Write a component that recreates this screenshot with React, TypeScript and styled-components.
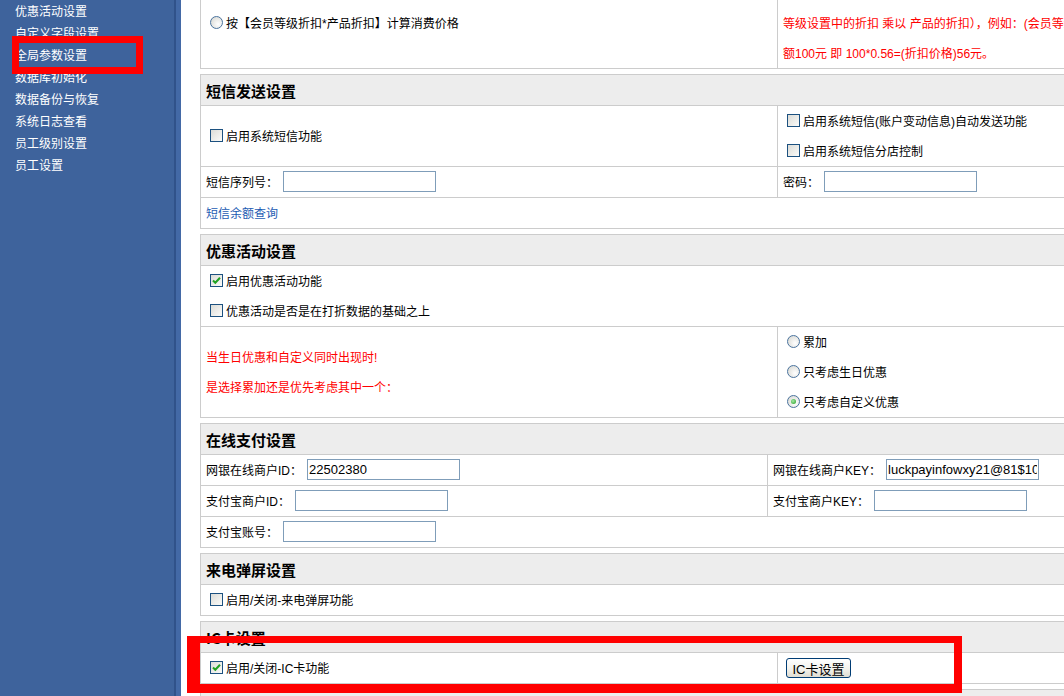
import React from 'react'
import styled, { createGlobalStyle, css } from 'styled-components'

const GlobalStyle = createGlobalStyle`
  html, body {
    margin: 0;
    padding: 0;
    background: #ffffff;
  }
  body {
    font-family: 'Liberation Sans', 'Noto Sans CJK SC', sans-serif;
    font-size: 12px;
    color: #000000;
  }
`

const Page = styled.div`
  position: relative;
  display: flex;
  width: 1064px;
  height: 696px;
  overflow: hidden;
`

const Sidebar = styled.nav`
  flex: 0 0 181px;
  padding-top: 1px;
  background: linear-gradient(
    to right,
    #3e639c 0 174px,
    #30528a 174px 176px,
    #4369a6 176px 181px
  );
`

const NavItem = styled.div`
  height: 22px;
  line-height: 22px;
  padding-left: 15px;
  color: #ffffff;
  font-size: 12px;
  white-space: nowrap;
`

const Main = styled.main`
  flex: 1;
  min-width: 0;
  padding-left: 19px;
  overflow: hidden;
  background: #ffffff;
`

const Panel = styled.section<{ $offset?: number }>`
  width: 900px;
  border: 1px solid #cccccc;
  margin-top: ${(p) => p.$offset ?? 0}px;
  margin-bottom: 5px;
`

const Header = styled.h3`
  margin: 0;
  height: 25px;
  padding: 5px 0 0 5px;
  line-height: 25px;
  background: #ededed;
  border-bottom: 1px solid #cccccc;
  font: bold 15px 'Noto Sans CJK SC', sans-serif;
  color: #000000;
  white-space: nowrap;
  overflow: hidden;
`

const Row = styled.div<{ $split?: number }>`
  display: grid;
  grid-template-columns: ${(p) => (p.$split ? `${p.$split}px 1fr` : '1fr')};
  & + & {
    border-top: 1px solid #cccccc;
  }
`

const Cell = styled.div<{ $divider?: boolean }>`
  min-width: 0;
  padding: 0 5px;
  display: flex;
  flex-direction: column;
  justify-content: center;
  white-space: nowrap;
  ${(p) =>
    p.$divider &&
    css`
      border-left: 1px solid #cccccc;
    `}
`

const Line = styled.div<{ $tone?: 'red' | 'plain' }>`
  box-sizing: border-box;
  height: 30px;
  padding-bottom: 1px;
  display: flex;
  align-items: center;
  gap: 3px;
  font-size: 12px;
  color: ${(p) => (p.$tone === 'red' ? '#ff0000' : '#000000')};
`

const Check = styled.span`
  box-sizing: border-box;
  flex: none;
  width: 13px;
  height: 13px;
  margin-left: 4px;
  border: 1px solid #1c5180;
  background: linear-gradient(135deg, #dcdcd7, #fbfbf9);
  display: inline-flex;
  align-items: center;
  justify-content: center;
`

const Radio = styled.span<{ $on?: boolean }>`
  position: relative;
  box-sizing: border-box;
  flex: none;
  width: 13px;
  height: 13px;
  margin-left: 4px;
  border-radius: 50%;
  border: 1px solid #4a739e;
  background: radial-gradient(circle at 65% 65%, #ffffff, #d4d4ce);
  ${(p) =>
    p.$on &&
    css`
      &::after {
        content: '';
        position: absolute;
        left: 3px;
        top: 3px;
        width: 5px;
        height: 5px;
        border-radius: 50%;
        background: radial-gradient(circle at 40% 40%, #a6eaa6, #1d9a1d);
      }
    `}
`

const Field = styled.input`
  box-sizing: border-box;
  flex: none;
  width: 153px;
  height: 21px;
  margin-left: 2px;
  padding: 0 1px;
  border: 1px solid #7f9db9;
  font: 13px 'Liberation Sans', sans-serif;
  color: #000000;
  outline: none;
  background: #ffffff;
`

const Btn = styled.button`
  width: 65px;
  height: 20px;
  margin-left: 3px;
  padding: 0;
  border: 1px solid #003c74;
  border-radius: 3px;
  background: linear-gradient(#ffffff, #f3f2ec 55%, #dedcd2);
  font: 13px 'Liberation Sans', 'Noto Sans CJK SC', sans-serif;
  color: #000000;
`

const QueryLink = styled.a`
  color: #1d5cb3;
  text-decoration: none;
  font-size: 12px;
  cursor: pointer;
`

const Mark = styled.div<{
  $x: number
  $y: number
  $w: number
  $h: number
  $edges: string
}>`
  position: absolute;
  left: ${(p) => p.$x}px;
  top: ${(p) => p.$y}px;
  width: ${(p) => p.$w}px;
  height: ${(p) => p.$h}px;
  box-sizing: border-box;
  border-style: solid;
  border-color: #ff0000;
  border-width: ${(p) => p.$edges};
  pointer-events: none;
`

const Tick = () => (
  <svg width="11" height="11" viewBox="0 0 11 11">
    <path
      d="M2 5.5 L4.3 7.8 L9 2.8"
      fill="none"
      stroke="#21a121"
      strokeWidth="2"
    />
  </svg>
)

const CheckItem = ({ on, label }: { on?: boolean; label: string }) => (
  <Line>
    <Check>{on && <Tick />}</Check>
    {label}
  </Line>
)

const RadioItem = ({ on, label }: { on?: boolean; label: string }) => (
  <Line>
    <Radio $on={on} />
    {label}
  </Line>
)

const InputItem = ({ label, value }: { label: string; value?: string }) => (
  <Line>
    {label}
    <Field defaultValue={value ?? ''} />
  </Line>
)

const navItems = [
  '优惠活动设置',
  '自定义字段设置',
  '全局参数设置',
  '数据库初始化',
  '数据备份与恢复',
  '系统日志查看',
  '员工级别设置',
  '员工设置',
]

export default function App() {
  return (
    <>
      <GlobalStyle />
      <Page>
        <Sidebar>
          {navItems.map((item) => (
            <NavItem key={item}>{item}</NavItem>
          ))}
        </Sidebar>

        <Main>
          <Panel $offset={-23}>
            <Row $split={576}>
              <Cell>
                <RadioItem label="按【会员等级折扣*产品折扣】计算消费价格" />
              </Cell>
              <Cell $divider>
                <Line $tone="red">说明：该方式计算消费价格时，使用的折扣为（会员</Line>
                <Line $tone="red">
                  等级设置中的折扣 乘以 产品的折扣），例如：(会员等级折扣为0.8，产品折扣为0.7，消费金
                </Line>
                <Line $tone="red">额100元 即 100*0.56=(折扣价格)56元。</Line>
              </Cell>
            </Row>
          </Panel>

          <Panel>
            <Header>短信发送设置</Header>
            <Row $split={576}>
              <Cell>
                <CheckItem label="启用系统短信功能" />
              </Cell>
              <Cell $divider>
                <CheckItem label="启用系统短信(账户变动信息)自动发送功能" />
                <CheckItem label="启用系统短信分店控制" />
              </Cell>
            </Row>
            <Row $split={576}>
              <Cell>
                <InputItem label="短信序列号：" />
              </Cell>
              <Cell $divider>
                <InputItem label="密码：" />
              </Cell>
            </Row>
            <Row>
              <Cell>
                <Line>
                  <QueryLink>短信余额查询</QueryLink>
                </Line>
              </Cell>
            </Row>
          </Panel>

          <Panel>
            <Header>优惠活动设置</Header>
            <Row>
              <Cell>
                <CheckItem on label="启用优惠活动功能" />
                <CheckItem label="优惠活动是否是在打折数据的基础之上" />
              </Cell>
            </Row>
            <Row $split={576}>
              <Cell>
                <Line $tone="red">当生日优惠和自定义同时出现时!</Line>
                <Line $tone="red">是选择累加还是优先考虑其中一个：</Line>
              </Cell>
              <Cell $divider>
                <RadioItem label="累加" />
                <RadioItem label="只考虑生日优惠" />
                <RadioItem on label="只考虑自定义优惠" />
              </Cell>
            </Row>
          </Panel>

          <Panel>
            <Header>在线支付设置</Header>
            <Row $split={566}>
              <Cell>
                <InputItem label="网银在线商户ID：" value="22502380" />
              </Cell>
              <Cell $divider>
                <InputItem label="网银在线商户KEY：" value="luckpayinfowxy21@81$1088" />
              </Cell>
            </Row>
            <Row $split={566}>
              <Cell>
                <InputItem label="支付宝商户ID：" />
              </Cell>
              <Cell $divider>
                <InputItem label="支付宝商户KEY：" />
              </Cell>
            </Row>
            <Row>
              <Cell>
                <InputItem label="支付宝账号：" />
              </Cell>
            </Row>
          </Panel>

          <Panel>
            <Header>来电弹屏设置</Header>
            <Row>
              <Cell>
                <CheckItem label="启用/关闭-来电弹屏功能" />
              </Cell>
            </Row>
          </Panel>

          <Panel>
            <Header>IC卡设置</Header>
            <Row $split={576}>
              <Cell>
                <CheckItem on label="启用/关闭-IC卡功能" />
              </Cell>
              <Cell $divider>
                <Line>
                  <Btn>IC卡设置</Btn>
                </Line>
              </Cell>
            </Row>
          </Panel>

          {/* next panel, only its top edge shows above the fold */}
          <Panel>
            <Header />
          </Panel>
        </Main>

        <Mark $x={12} $y={36} $w={131} $h={38} $edges="7px" />
        <Mark $x={187} $y={636} $w={775} $h={57} $edges="7px 8px 9px 13px" />
      </Page>
    </>
  )
}
